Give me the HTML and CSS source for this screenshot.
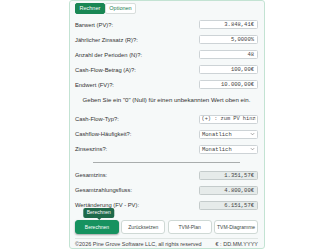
FILE: index.html
```html
<!DOCTYPE html>
<html lang="de">
<head>
<meta charset="utf-8">
<title>TVM Rechner</title>
<link rel="stylesheet" href="styles.css">
</head>
<body>
<div class="calc">
  <div class="tabs">
    <span class="tab active">Rechner</span>
    <span class="tab">Optionen</span>
  </div>

  <div class="rows first">
    <div class="row"><span class="label">Barwert (PV)?:</span><span class="field num">3.848,41€</span></div>
    <div class="row"><span class="label">Jährlicher Zinssatz (R)?:</span><span class="field num">5,0000%</span></div>
    <div class="row"><span class="label">Anzahl der Perioden (N)?:</span><span class="field num">48</span></div>
    <div class="row"><span class="label">Cash-Flow-Betrag (A)?:</span><span class="field num">100,00€</span></div>
    <div class="row"><span class="label">Endwert (FV)?:</span><span class="field num">10.000,00€</span></div>
  </div>

  <p class="hint">Geben Sie ein "0" (Null) für einen unbekannten Wert oben ein.</p>

  <div class="rows">
    <div class="row"><span class="label">Cash-Flow-Typ?:</span><span class="field text"><span class="clip">(+) : zum PV hinzufügen</span></span></div>
    <div class="row"><span class="label">Cashflow-Häufigkeit?:</span><span class="field select">Monatlich<svg class="chev" viewBox="0 0 6 4"><path d="M1 1l2 2 2-2" fill="none" stroke="#777" stroke-width="0.8"/></svg></span></div>
    <div class="row"><span class="label">Zinseszins?:</span><span class="field select">Monatlich<svg class="chev" viewBox="0 0 6 4"><path d="M1 1l2 2 2-2" fill="none" stroke="#777" stroke-width="0.8"/></svg></span></div>
  </div>

  <hr class="sep">

  <div class="rows">
    <div class="row"><span class="label">Gesamtzins:</span><span class="field num out">1.351,57€</span></div>
    <div class="row"><span class="label">Gesamtzahlungsfluss:</span><span class="field num out">4.800,00€</span></div>
    <div class="row"><span class="label">Wertänderung (FV - PV):</span><span class="field num out">6.151,57€</span></div>
  </div>

  <div class="actions">
    <div class="btn-wrap">
      <span class="tip">Berechnen</span>
      <button class="btn primary">Berechnen</button>
    </div>
    <button class="btn">Zurücksetzen</button>
    <button class="btn">TVM-Plan</button>
    <button class="btn">TVM-Diagramme</button>
  </div>

  <div class="footer">
    <span>©2026 Pine Grove Software LLC, all rights reserved</span>
    <span>€ : DD.MM.YYYY</span>
  </div>
</div>
</body>
</html>
```

FILE: styles.css
```css
html, body {
  margin: 0;
  padding: 0;
  background: #ffffff;
}

body {
  font-family: "Liberation Sans", Arial, sans-serif;
  font-size: 5.8px;
  color: #333333;
}

.calc {
  width: 196px;
  height: 249px;
  box-sizing: border-box;
  margin: 0 auto;
  border: 1px solid #c3e3d3;
  border-radius: 3px;
  background: #f6f9f9;
  padding: 2px 6px 0 5px;
  display: flex;
  flex-direction: column;
}

.tabs {
  display: flex;
  height: 11px;
  margin-bottom: 3.5px;
}

.tab {
  display: flex;
  align-items: center;
  padding: 0 3.5px;
  border: 1px solid #d8dedc;
  border-radius: 2px;
  background: #ffffff;
  color: #1d7a52;
  font-size: 5.5px;
}

.tab.active {
  background: #198754;
  border-color: #198754;
  color: #ffffff;
}

.rows {
  display: flex;
  flex-direction: column;
}

.row {
  height: 15px;
  display: flex;
  align-items: center;
  justify-content: space-between;
}

.label {
  white-space: nowrap;
}

.field {
  box-sizing: border-box;
  width: 59px;
  height: 9px;
  border: 1px solid #cdd3d6;
  border-radius: 1.5px;
  background: #ffffff;
  font-family: "Liberation Mono", "DejaVu Sans Mono", monospace;
  font-size: 5.5px;
  color: #444444;
  display: flex;
  align-items: center;
  padding: 0 3px;
  white-space: nowrap;
  overflow: hidden;
}

.field.num {
  justify-content: flex-end;
}

.field.text {
  padding: 0 1px 0 1.5px;
  font-size: 5.3px;
}

.clip {
  display: block;
  width: 100%;
  overflow: hidden;
}

.field.select {
  justify-content: space-between;
  padding-left: 2px;
  padding-right: 2px;
}

.chev {
  width: 5px;
  height: 4px;
}

.field.out {
  background: #e6ebea;
  border-color: #c4cbcb;
}

.hint {
  margin: 0;
  padding: 5px 0 8px;
  line-height: 6.5px;
  font-size: 6.1px;
  text-align: center;
}

.sep {
  width: 147px;
  margin: 5px auto 5px;
  border: 0;
  border-top: 1px solid #a9adad;
  height: 0;
}

.actions {
  margin-top: 7px;
  display: grid;
  grid-template-columns: repeat(4, 1fr);
  gap: 2.5px;
  height: 14px;
}

.btn-wrap {
  position: relative;
  display: flex;
}

.btn {
  width: 100%;
  height: 14px;
  margin: 0;
  padding: 0;
  border: 1px solid #cfd9d5;
  border-radius: 3px;
  background: #ffffff;
  color: #3d4a45;
  font-family: "Liberation Sans", Arial, sans-serif;
  font-size: 5px;
  white-space: nowrap;
}

.btn.primary {
  background: #16925f;
  border-color: #16925f;
  color: #ffffff;
  box-shadow: 0 1px 2px rgba(0, 0, 0, 0.35);
}

.tip {
  position: absolute;
  left: 50%;
  bottom: 100%;
  margin-bottom: 2px;
  transform: translateX(-44%);
  background: #1f6a4a;
  color: #ffffff;
  font-size: 5px;
  line-height: 5px;
  padding: 2.5px 3.5px;
  border-radius: 2px;
  white-space: nowrap;
}

.tip::after {
  content: "";
  position: absolute;
  left: 50%;
  top: 100%;
  margin-left: -2px;
  border: 2px solid transparent;
  border-top-color: #1f6a4a;
}

.footer {
  margin-top: 4.5px;
  border-top: 1px solid #dfe5e3;
  display: flex;
  justify-content: space-between;
  align-items: center;
  height: 9px;
  font-size: 5.5px;
  color: #444444;
}
```
